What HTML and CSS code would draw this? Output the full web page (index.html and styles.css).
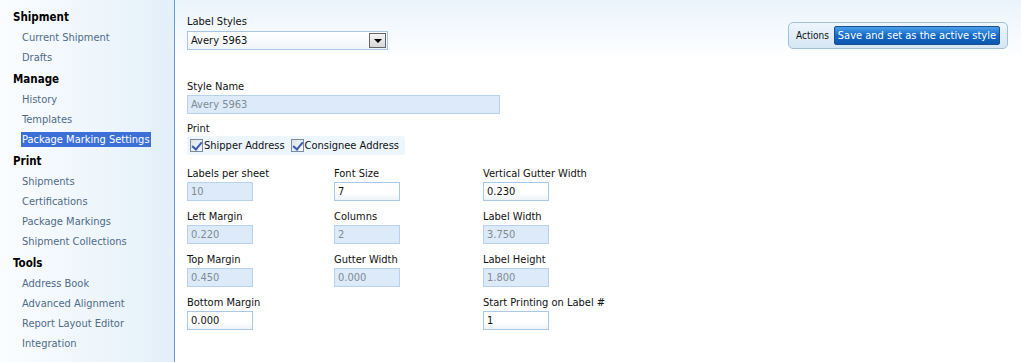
FILE: index.html
```html
<!DOCTYPE html>
<html lang="en">
<head>
  <meta charset="UTF-8">
  <title>Package Marking Settings</title>
  <link rel="stylesheet" href="styles.css">
</head>
<body>

  <div class="sidebar">
    <div class="nav-head">Shipment</div>
    <div class="nav-item">Current Shipment</div>
    <div class="nav-item">Drafts</div>
    <div class="nav-head">Manage</div>
    <div class="nav-item">History</div>
    <div class="nav-item">Templates</div>
    <div class="nav-item"><span class="active">Package Marking Settings</span></div>
    <div class="nav-head">Print</div>
    <div class="nav-item">Shipments</div>
    <div class="nav-item">Certifications</div>
    <div class="nav-item">Package Markings</div>
    <div class="nav-item">Shipment Collections</div>
    <div class="nav-head">Tools</div>
    <div class="nav-item">Address Book</div>
    <div class="nav-item">Advanced Alignment</div>
    <div class="nav-item">Report Layout Editor</div>
    <div class="nav-item">Integration</div>
  </div>

  <div class="main">
    <div class="header">
      <div class="field">
        <div class="label">Label Styles</div>
        <div class="select">
          <span>Avery 5963</span>
          <span class="arrow"></span>
        </div>
      </div>
      <div class="actions">
        <span>Actions</span>
        <button class="btn">Save and set as the active style</button>
      </div>
    </div>

    <div class="form">
      <div class="label">Style Name</div>
      <div class="input wide disabled">Avery 5963</div>

      <div class="label print-label">Print</div>
      <div class="checks">
        <label><span class="box"></span>Shipper Address</label>
        <label><span class="box"></span>Consignee Address</label>
      </div>

      <div class="grid">
        <div class="cell">
          <div class="label">Labels per sheet</div>
          <div class="input disabled">10</div>
        </div>
        <div class="cell">
          <div class="label">Font Size</div>
          <div class="input">7</div>
        </div>
        <div class="cell">
          <div class="label">Vertical Gutter Width</div>
          <div class="input">0.230</div>
        </div>

        <div class="cell">
          <div class="label">Left Margin</div>
          <div class="input disabled">0.220</div>
        </div>
        <div class="cell">
          <div class="label">Columns</div>
          <div class="input disabled">2</div>
        </div>
        <div class="cell">
          <div class="label">Label Width</div>
          <div class="input disabled">3.750</div>
        </div>

        <div class="cell">
          <div class="label">Top Margin</div>
          <div class="input disabled">0.450</div>
        </div>
        <div class="cell">
          <div class="label">Gutter Width</div>
          <div class="input disabled">0.000</div>
        </div>
        <div class="cell">
          <div class="label">Label Height</div>
          <div class="input disabled">1.800</div>
        </div>

        <div class="cell">
          <div class="label">Bottom Margin</div>
          <div class="input">0.000</div>
        </div>
        <div class="cell"></div>
        <div class="cell">
          <div class="label">Start Printing on Label #</div>
          <div class="input">1</div>
        </div>
      </div>
    </div>
  </div>

</body>
</html>
```

FILE: styles.css
```css
body {
  margin: 0;
  font-family: "DejaVu Sans", sans-serif;
  font-stretch: condensed;
  font-size: 11px;
  color: #111;
  background: white;
  display: flex;
  height: 362px;
  overflow: hidden;
}
.sidebar {
  width: 174px;
  padding-top: 6px;
  border-right: 1px solid #6a9bcf;
  background: linear-gradient(to right, #fbfdff, #e3f0f9);
  flex-shrink: 0;
}
.nav-head {
  font-weight: bold;
  font-size: 11.5px;
  line-height: 22px;
  padding-left: 13px;
  color: #000;
}
.nav-item {
  line-height: 20px;
  padding-left: 22px;
  color: #4f6b88;
}
.active {
  background: #3c6fd8;
  color: white;
  padding: 1px 1px;
  margin-left: -1px;
}
.main {
  flex: 1;
}
.header {
  height: 60px;
  padding: 15px 13px 0 12px;
  box-sizing: border-box;
  display: flex;
  justify-content: space-between;
  background: linear-gradient(to bottom, #eaf4fc, #ffffff);
}
.label {
  line-height: 13px;
  margin-bottom: 2px;
}
.header .label {
  margin-bottom: 3px;
}
.select {
  width: 196px;
  height: 17px;
  border: 1px solid #a8c6e4;
  background: linear-gradient(to bottom, #ffffff, #f1f5f9);
  display: flex;
  align-items: center;
  justify-content: space-between;
  padding-left: 3px;
}
.arrow {
  width: 15px;
  height: 13px;
  margin-right: 1px;
  border: 1px solid #666;
  background: linear-gradient(to bottom, #f4f4f4, #d8d8d8);
  position: relative;
}
.arrow::after {
  content: "";
  position: absolute;
  left: 4px;
  top: 5px;
  border-left: 4px solid transparent;
  border-right: 4px solid transparent;
  border-top: 4px solid #000;
}
.actions {
  margin-top: 7px;
  height: 27px;
  padding: 0 7px 0 7px;
  border: 1px solid #9fbfdd;
  border-radius: 5px;
  background: linear-gradient(to bottom, #eef5fc, #d6e6f4);
  display: flex;
  align-items: center;
  gap: 5px;
  box-sizing: border-box;
  font-size: 10px;
}
.btn {
  font-family: inherit;
  font-stretch: condensed;
  font-size: 11px;
  color: white;
  height: 19px;
  padding: 0 3px;
  border: 1px solid #1b4f8e;
  border-radius: 2px;
  background: linear-gradient(to bottom, #4aa0ec, #1669c6 50%, #0a58b0);
}
.form {
  padding: 20px 0 0 12px;
}
.input {
  width: 61px;
  height: 17px;
  line-height: 17px;
  padding-left: 3px;
  border: 1px solid #a9c9e8;
  background: linear-gradient(to bottom, #ffffff 60%, #eef3f8);
  color: #111;
}
.input.wide {
  width: 308px;
}
.input.disabled {
  background: #dceafa;
  border-color: #b7d2ee;
  color: #808a94;
}
.print-label {
  margin-top: 8px;
  margin-bottom: 1px;
}
.checks {
  display: inline-flex;
  gap: 6px;
  height: 19px;
  padding: 0 6px 0 3px;
  background: #edf5fd;
  border-radius: 3px;
}
.checks label {
  display: flex;
  align-items: center;
}
.box {
  width: 11px;
  height: 11px;
  border: 1px solid #7a8aa0;
  background: linear-gradient(to bottom right, #dfe4ea, #f6f7f9);
  margin-right: 1px;
  position: relative;
}
.box::after {
  content: "";
  position: absolute;
  left: 3px;
  top: 0px;
  width: 4px;
  height: 8px;
  border-right: 2px solid #3b5bb0;
  border-bottom: 2px solid #3b5bb0;
  transform: rotate(40deg);
}
.grid {
  margin-top: 12px;
  display: grid;
  grid-template-columns: 147px 149px 150px;
  row-gap: 9px;
}
```
